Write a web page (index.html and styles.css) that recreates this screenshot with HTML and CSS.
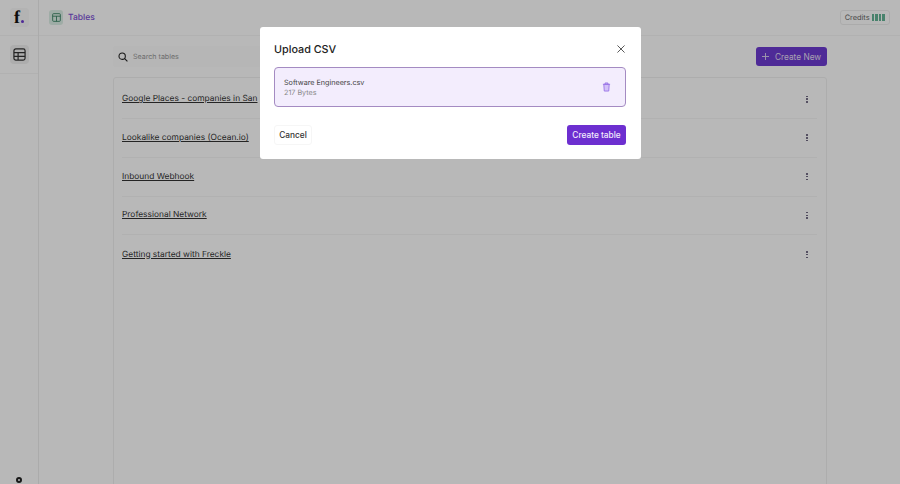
FILE: index.html
```html
<!DOCTYPE html>
<html lang="en">
<head>
  <meta charset="UTF-8" />
  <title>Tables</title>
  <link rel="stylesheet" href="styles.css">
</head>
<body>

  <div class="app">
    <aside class="sidebar">
      <div class="side-top">
        <div class="logo">f<span class="logo-dot"></span></div>
      </div>
      <div class="side-nav">
        <div class="nav-btn">
          <svg width="13" height="13" viewBox="0 0 14 14" fill="none" stroke="#333" stroke-width="1.3">
            <rect x="1" y="1" width="12" height="12" rx="2" />
            <path d="M1 5h12M1 9h12M5.5 5v8" />
          </svg>
        </div>
      </div>
      <div class="side-bottom">
        <span class="user-dot"></span>
      </div>
    </aside>

    <div class="content">
      <header class="topbar">
        <div class="crumb">
          <div class="crumb-icon">
            <svg width="9" height="9" viewBox="0 0 14 14" fill="none" stroke="#2f7d5c" stroke-width="1.3">
              <rect x="1" y="1" width="12" height="12" rx="1.5" />
              <path d="M1 5h12M7 5v8" />
            </svg>
          </div>
          <span class="crumb-text">Tables</span>
        </div>
        <div class="credits">
          <span>Credits</span>
          <div class="credit-bars"><i></i><i></i><i></i><i></i></div>
        </div>
      </header>

      <main class="main">
        <div class="toolbar">
          <div class="search">
            <svg width="10" height="10" viewBox="0 0 12 12" fill="none" stroke="#222" stroke-width="1.3">
              <circle cx="5" cy="5" r="3.8" />
              <path d="M8 8l3.3 3.3" />
            </svg>
            <span>Search tables</span>
          </div>
          <button class="btn-new">
            <svg width="7" height="7" viewBox="0 0 8 8" stroke="#d9cfee" stroke-width="1.1"><path d="M4 0v8M0 4h8" /></svg>
            Create New
          </button>
        </div>

        <div class="table-list">
          <div class="table-row"><a>Google Places - companies in San</a><span class="more"><i></i><i></i><i></i></span></div>
          <div class="table-row"><a>Lookalike companies (Ocean.io)</a><span class="more"><i></i><i></i><i></i></span></div>
          <div class="table-row"><a>Inbound Webhook</a><span class="more"><i></i><i></i><i></i></span></div>
          <div class="table-row"><a>Professional Network</a><span class="more"><i></i><i></i><i></i></span></div>
          <div class="table-row"><a>Getting started with Freckle</a><span class="more"><i></i><i></i><i></i></span></div>
        </div>
      </main>
    </div>
  </div>

  <div class="overlay">
    <div class="modal">
      <div class="modal-head">
        <h2>Upload CSV</h2>
        <svg width="8" height="8" viewBox="0 0 9 9" stroke="#444" stroke-width="1"><path d="M.5.5l8 8M8.5.5l-8 8" /></svg>
      </div>
      <div class="file-box">
        <div class="file-info">
          <p class="file-name">Software Engineers.csv</p>
          <p class="file-size">217 Bytes</p>
        </div>
        <svg width="9" height="10" viewBox="0 0 10 11" fill="#d3c1f8" stroke="#9a75e6" stroke-width="1">
          <path d="M1 2.5h8M3.5 2.5V1h3v1.5M2 2.5l.5 7.5h5l.5-7.5z" />
        </svg>
      </div>
      <div class="modal-foot">
        <button class="btn-cancel">Cancel</button>
        <button class="btn-create">Create table</button>
      </div>
    </div>
  </div>

</body>
</html>
```

FILE: styles.css
```css
* {
  box-sizing: border-box;
}

body {
  margin: 0;
  height: 484px;
  overflow: hidden;
  background: #fff;
  font-family: 'Inter', sans-serif;
  color: #222;
  text-rendering: geometricPrecision;
}

p, h2 {
  margin: 0;
}

.app {
  display: flex;
  height: 484px;
}

.sidebar {
  width: 39px;
  flex-shrink: 0;
  display: flex;
  flex-direction: column;
  border-right: 1px solid #ededed;
}

.side-top {
  height: 36px;
  display: flex;
  align-items: center;
  justify-content: center;
  border-bottom: 1px solid #f6f6f6;
}

.logo {
  width: 19px;
  height: 19px;
  border-radius: 4px;
  background: #f8f8f8;
  display: flex;
  align-items: baseline;
  justify-content: center;
  font-family: 'Liberation Serif', serif;
  font-weight: 700;
  font-size: 18px;
  line-height: 19px;
  color: #111;
}

.logo-dot {
  width: 3px;
  height: 3px;
  margin-left: 1px;
  border-radius: 50%;
  background: #6d3bd1;
}

.side-nav {
  height: 38px;
  display: flex;
  justify-content: center;
  align-items: center;
  border-bottom: 1px solid #f6f6f6;
}

.nav-btn {
  width: 19px;
  height: 19px;
  border-radius: 4px;
  background: #f0f0f0;
  display: flex;
  align-items: center;
  justify-content: center;
}

.side-bottom {
  margin-top: auto;
  height: 9px;
  display: flex;
  justify-content: center;
}

.user-dot {
  width: 6px;
  height: 6px;
  border: 2px solid #222;
  border-radius: 50%;
  margin-top: 2px;
}

.content {
  flex: 1;
  min-width: 0;
}

.topbar {
  height: 36px;
  display: flex;
  align-items: center;
  justify-content: space-between;
  padding: 0 10px;
  border-bottom: 1px solid #f6f6f6;
}

.crumb {
  display: flex;
  align-items: center;
  gap: 5px;
}

.crumb-icon {
  width: 14px;
  height: 15px;
  border-radius: 3px;
  background: #dcefe6;
  display: flex;
  align-items: center;
  justify-content: center;
}

.crumb-text {
  font-size: 8.5px;
  font-weight: 500;
  color: #7c4fd6;
}

.credits {
  height: 15px;
  display: flex;
  align-items: center;
  gap: 2px;
  padding: 0 4px;
  border: 1px solid #eeeeee;
  border-radius: 3px;
  font-size: 7.4px;
  color: #666;
}

.credit-bars {
  display: flex;
  gap: 1px;
}

.credit-bars i {
  width: 2.6px;
  height: 7px;
  background: #64b596;
}

.main {
  padding: 10px 73px 0 74px;
}

.toolbar {
  display: flex;
  justify-content: space-between;
  align-items: center;
  height: 21px;
  margin-bottom: 10px;
}

.search {
  width: 300px;
  height: 21px;
  display: flex;
  align-items: center;
  gap: 5px;
  padding-left: 5px;
  border-radius: 3px;
  background: #fcfcfc;
  font-size: 7.1px;
  color: #999;
}

.btn-new {
  width: 71px;
  height: 19px;
  display: flex;
  align-items: center;
  gap: 6px;
  padding: 0 0 0 6px;
  border: none;
  border-radius: 3px;
  background: #6d3bd1;
  color: #e6dff5;
  font-family: inherit;
  font-size: 8.3px;
}

.table-list {
  height: 420px;
  padding: 2.25px 9px 0 8px;
  border: 1px solid #f0f0f0;
  border-radius: 3px;
}

.table-row {
  height: 38.75px;
  display: flex;
  align-items: center;
  justify-content: space-between;
  border-bottom: 1px solid #f6f6f6;
  font-size: 8.4px;
  color: #333;
}

.table-row:last-child {
  border-bottom: none;
}

.table-row a {
  text-decoration: underline;
}

.more {
  display: flex;
  flex-direction: column;
  gap: 1.2px;
  margin-right: 9px;
}

.more i {
  width: 1.6px;
  height: 1.6px;
  border-radius: 50%;
  background: #5c5470;
}

.overlay {
  position: fixed;
  inset: 0;
  background: rgba(0, 0, 0, 0.28);
}

.modal {
  position: absolute;
  left: 260px;
  top: 27px;
  width: 381px;
  height: 132px;
  padding: 14px;
  border-radius: 3px;
  background: #fff;
}

.modal-head {
  height: 16px;
  margin-bottom: 10px;
  display: flex;
  align-items: center;
  justify-content: space-between;
  padding-right: 2px;
}

.modal-head h2 {
  font-size: 10.8px;
  font-weight: 500;
  color: #222;
}

.file-box {
  height: 40px;
  width: 352px;
  display: flex;
  align-items: center;
  justify-content: space-between;
  padding: 0 14px 0 9px;
  border: 1px solid #a48bc2;
  border-radius: 4px;
  background: #f3edfd;
}

.file-info {
  display: flex;
  flex-direction: column;
  gap: 1px;
}

.file-name {
  font-size: 7.2px;
  color: #444;
}

.file-size {
  font-size: 7.2px;
  color: #888;
}

.modal-foot {
  display: flex;
  justify-content: space-between;
  align-items: center;
  margin-top: 18px;
  width: 352px;
}

.btn-cancel {
  width: 38px;
  height: 20px;
  padding: 0;
  border: 1px solid #f6f6f6;
  border-radius: 3px;
  background: #fff;
  font-family: inherit;
  font-size: 8.3px;
  font-weight: 500;
  color: #333;
}

.btn-create {
  width: 59px;
  height: 20px;
  padding: 0;
  border: none;
  border-radius: 3px;
  background: #6d2fd0;
  font-family: inherit;
  font-size: 8.3px;
  font-weight: 500;
  color: #f3edfd;
}
```
